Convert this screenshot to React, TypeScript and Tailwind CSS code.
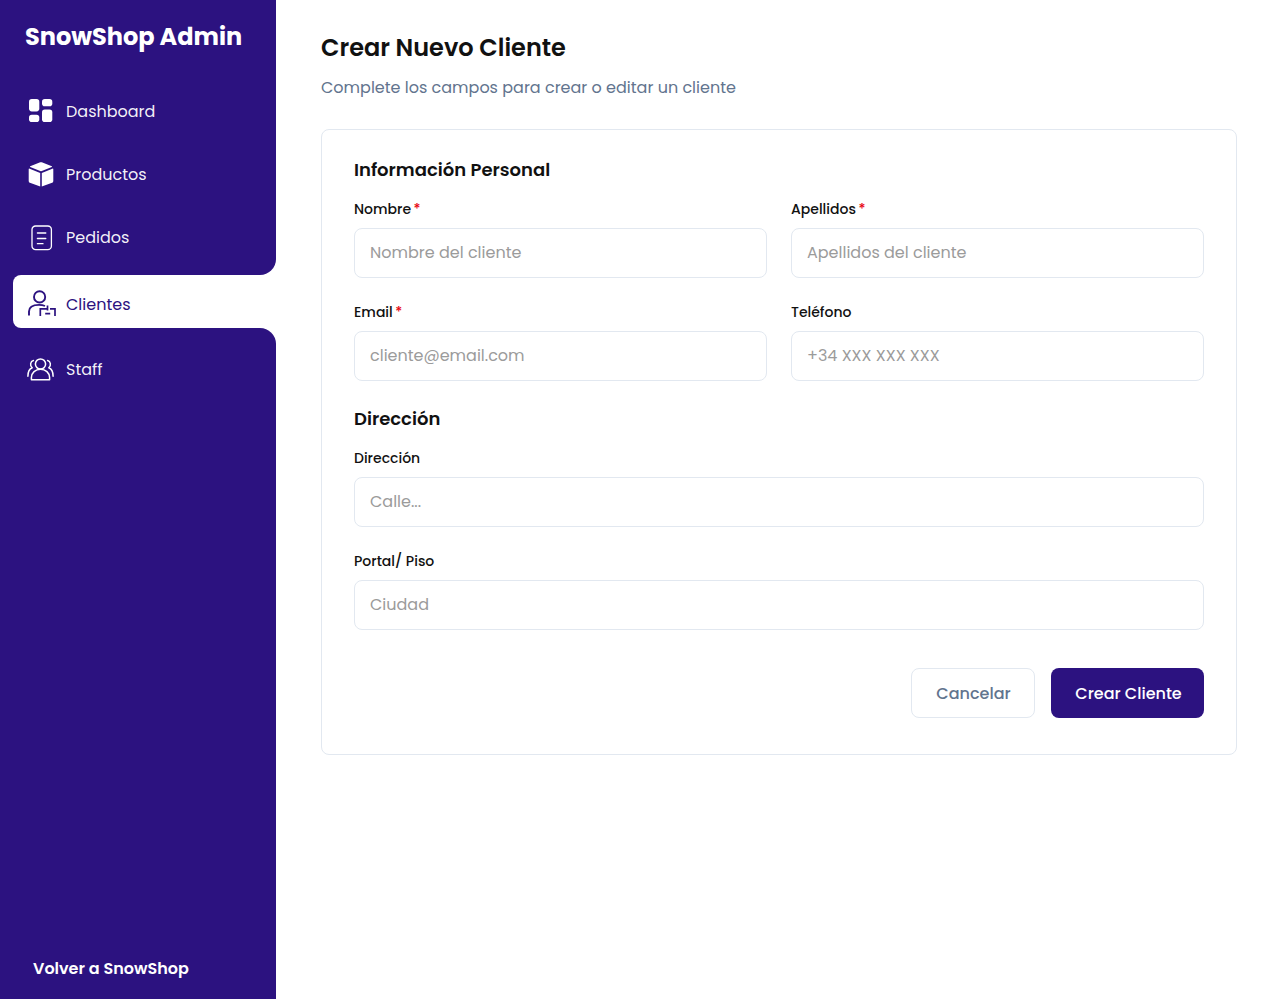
import type { ReactNode } from "react";

function DashboardIcon() {
  return (
    <svg width="24" height="24" viewBox="0 0 24 24" fill="#fff" className="shrink-0">
      <rect x="0" y="0" width="10.3" height="12.4" rx="2.8" />
      <rect x="13" y="0" width="10.3" height="7.2" rx="2.8" />
      <rect x="0" y="15.8" width="10.3" height="7.2" rx="2.8" />
      <rect x="13" y="10.6" width="10.3" height="12.4" rx="2.8" />
    </svg>
  );
}

function BoxIcon() {
  return (
    <svg width="26" height="26" viewBox="0 0 26 26" fill="#fff" className="shrink-0">
      <path d="M12.2 .3Q13 0 13.8 .3L23.8 4.2Q24.4 4.6 23.8 5L13.8 9Q13 9.3 12.2 9L2.2 5Q1.6 4.6 2.2 4.2Z" />
      <path d="M.7 7.3Q.7 6.3 1.7 6.7L12.2 10.9V24.6L1.9 20.8Q.7 20.4 .7 19Z" />
      <path d="M25.3 7.3Q25.3 6.3 24.3 6.7L13.8 10.9V24.6L24.1 20.8Q25.3 20.4 25.3 19Z" />
    </svg>
  );
}

function OrderIcon() {
  return (
    <svg width="22" height="26" viewBox="0 0 22 26" fill="none" stroke="#fff" strokeWidth="1.3" strokeLinecap="round" className="shrink-0">
      <rect x="1" y="1" width="19.4" height="23.6" rx="3.6" />
      <path d="M6.4 8H14.8M6.4 13.5H14.8M6.4 18.7H12" />
    </svg>
  );
}

function ClientIcon() {
  return (
    <svg width="28" height="27" viewBox="0 0 28 27" fill="none" stroke="#2c1280" strokeWidth="1.9" className="shrink-0">
      <circle cx="11.6" cy="6.9" r="5.6" />
      <path d="M1 25.4V21.6C1 16.8 5.4 14.9 11 14.9C13.4 14.9 15.4 15.3 17 16" />
      <path d="M12.3 26V18.9H19.4M19.5 15.4V20.4M22 18.9H27V26M17.2 23.6H22.2" strokeWidth="1.7" />
    </svg>
  );
}

function StaffIcon() {
  return (
    <svg width="28" height="23" viewBox="0 0 28 23" fill="none" stroke="#fff" strokeWidth="1.5" strokeLinecap="round" strokeLinejoin="round" className="shrink-0">
      <circle cx="13.5" cy="6" r="5.1" />
      <path d="M4.4 21.8V19.6C4.4 14.8 8.4 11.2 13.5 11.2S22.6 14.8 22.6 19.6V21.8Z" />
      <path d="M6.4 2.6C3.4 3.3 2.5 7.4 5.2 9.8C2.4 11 .9 13.9 .9 18.2M20.6 2.6C23.6 3.3 24.5 7.4 21.8 9.8C24.6 11 26.1 13.9 26.1 18.2" />
    </svg>
  );
}

function NavItem({ icon, label }: { icon: ReactNode; label: string }) {
  return (
    <a className="flex h-[63px] items-center">
      <span className="flex w-[66px] shrink-0 pl-[27px]">{icon}</span>
      <span className="text-base text-white/95">{label}</span>
    </a>
  );
}

function Field({ label, placeholder, required }: { label: string; placeholder: string; required?: boolean }) {
  return (
    <label className="block">
      <span className="flex h-5 items-center gap-[2.5px] text-sm font-medium text-[#111]">
        <span>{label}</span>
        {required && <span className="text-red-600">*</span>}
      </span>
      <input
        placeholder={placeholder}
        className="mt-[9px] block h-[50px] w-full rounded-lg border border-slate-200 px-[15px] pb-[2px] text-base text-[#111] outline-none placeholder:text-[#9b9b9b]"
      />
    </label>
  );
}

export default function App() {
  return (
    <div className="flex h-[999px] w-full overflow-hidden bg-white font-['Poppins','Inter',sans-serif]">
      <aside className="flex w-[276px] shrink-0 flex-col bg-white">
        <div className="h-[275px] rounded-br-2xl bg-[#2c1280]">
          <h1 className="flex h-[80px] items-center pb-[6px] pl-[25px] text-2xl font-bold text-white">SnowShop Admin</h1>
          <nav>
            <NavItem icon={<span className="pb-[2px] pl-0.5"><DashboardIcon /></span>} label="Dashboard" />
            <NavItem icon={<span className="pl-px"><BoxIcon /></span>} label="Productos" />
            <NavItem icon={<span className="pl-1"><OrderIcon /></span>} label="Pedidos" />
          </nav>
        </div>
        <div className="bg-[#2c1280] pl-[13px]">
          <a className="flex h-[53px] items-center rounded-l-lg bg-white pt-[6px]">
            <span className="w-[53px] pb-[3px] pl-[15px]">
              <ClientIcon />
            </span>
            <span className="text-base text-[#2c1280]">Clientes</span>
          </a>
        </div>
        <div className="flex flex-1 flex-col justify-between rounded-tr-2xl bg-[#2c1280] pt-[10px]">
          <NavItem icon={<StaffIcon />} label="Staff" />
          <a className="flex h-[62px] items-center pt-[2px] pl-[33px] text-base font-semibold text-white">Volver a SnowShop</a>
        </div>
      </aside>

      <main className="flex-1 pl-[45px] pr-[35px] pt-8">
        <h2 className="h-8 text-2xl leading-8 font-semibold text-[#111]">Crear Nuevo Cliente</h2>
        <p className="mt-3 h-6 text-base text-slate-500">Complete los campos para crear o editar un cliente</p>
        <form className="mt-[29px] h-[626px] rounded-lg border border-slate-200 px-8 pt-[26px]">
          <h3 className="h-7 text-lg font-semibold text-[#111]">Información Personal</h3>
          <div className="mt-[15px] grid grid-cols-2 gap-6">
            <Field label="Nombre" placeholder="Nombre del cliente" required />
            <Field label="Apellidos" placeholder="Apellidos del cliente" required />
            <Field label="Email" placeholder="cliente@email.com" required />
            <Field label="Teléfono" placeholder="+34 XXX XXX XXX" />
          </div>
          <h3 className="mt-6 h-7 text-lg font-semibold text-[#111]">Dirección</h3>
          <div className="mt-[15px] grid gap-6">
            <Field label="Dirección" placeholder="Calle..." />
            <Field label="Portal/ Piso" placeholder="Ciudad" />
          </div>
          <div className="mt-[38px] flex justify-end gap-4">
            <button type="button" className="h-[50px] w-[124px] rounded-lg border border-slate-200 pt-[2px] pl-px text-base font-medium text-slate-500">Cancelar</button>
            <button type="button" className="h-[50px] w-[153px] rounded-lg bg-[#2c1280] pt-[2px] pl-[2px] text-base font-medium text-white">Crear Cliente</button>
          </div>
        </form>
      </main>
    </div>
  );
}
